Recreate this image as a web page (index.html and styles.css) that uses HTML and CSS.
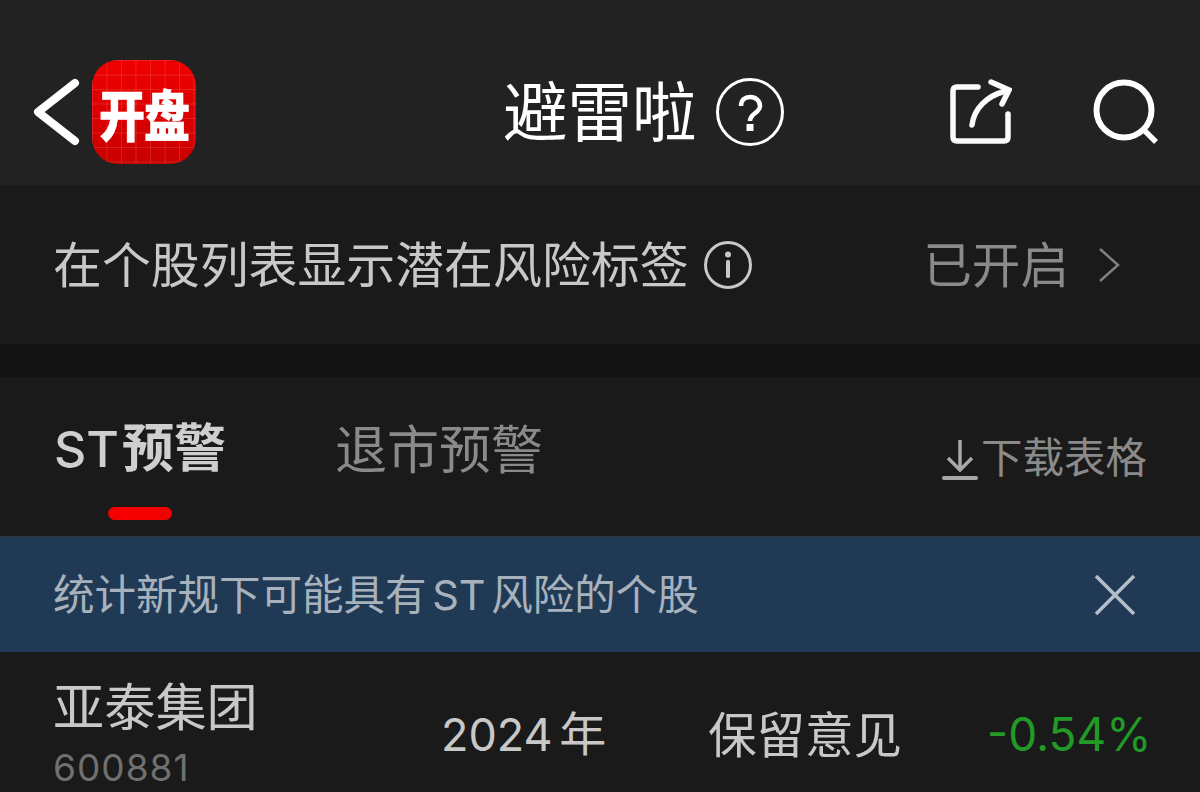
FILE: index.html
```html
<!DOCTYPE html>
<html lang="zh">
<head>
<meta charset="utf-8">
<title>避雷啦</title>
<link rel="stylesheet" href="styles.css">
</head>
<body>
<div class="page">
  <header class="header">
    <div class="header-left">
      <svg class="back" viewBox="0 0 48 70" width="48" height="70"><path d="M43 6 L6 35 L43 64" fill="none" stroke="#fff" stroke-width="8" stroke-linecap="round" stroke-linejoin="round"/></svg>
      <div class="logo"><span class="logo-text">开盘</span></div>
    </div>
    <div class="title-wrap">
      <span class="title">避雷啦</span>
      <svg class="help" viewBox="0 0 68 68" width="68" height="68"><circle cx="34" cy="34" r="32.5" fill="none" stroke="#fff" stroke-width="3"/><path d="M25 28 C25 22 29 19 34 19 C40 19 44 23 44 28 C44 35 34 35 34 43" fill="none" stroke="#fff" stroke-width="4.5"/><rect x="30.5" y="46" width="7" height="7" fill="#fff"/></svg>
    </div>
    <div class="header-right">
      <svg class="share" viewBox="0 0 62 66" width="62" height="66"><path d="M28 8 H7 Q3 8 3 12 V58 Q3 62 7 62 H54 Q58 62 58 58 V35" fill="none" stroke="#fbfbfb" stroke-width="5.5" stroke-linecap="round"/><path d="M22 46 C24 30 36 17 56 12" fill="none" stroke="#fbfbfb" stroke-width="5.5" stroke-linecap="round"/><path d="M41 3 L59 11 L52 25" fill="none" stroke="#fbfbfb" stroke-width="5.5" stroke-linecap="round"/></svg>
      <svg class="search" viewBox="0 0 66 66" width="66" height="66"><circle cx="31" cy="31" r="27.5" fill="none" stroke="#fff" stroke-width="6"/><path d="M50 50 L63 63" fill="none" stroke="#fff" stroke-width="5.5"/></svg>
    </div>
  </header>

  <section class="setting">
    <div class="setting-left">
      <span class="setting-text">在个股列表显示潜在风险标签</span>
      <svg class="info" viewBox="0 0 48 48" width="48" height="48"><circle cx="24" cy="24" r="22.5" fill="none" stroke="#c8c8c8" stroke-width="3"/><circle cx="24" cy="13.5" r="3" fill="#c8c8c8"/><rect x="22" y="19" width="4" height="18" rx="1.5" fill="#c8c8c8"/></svg>
    </div>
    <div class="setting-right">
      <span class="setting-status">已开启</span>
      <svg class="chev" viewBox="0 0 22 34" width="22" height="34"><path d="M2 1 L20 17 L2 33" fill="none" stroke="#808080" stroke-width="2.5"/></svg>
    </div>
  </section>

  <div class="gap"></div>

  <nav class="tabs">
    <div class="tab-list">
      <div class="tab tab-active"><span class="tab-latin">ST</span> 预警<span class="tab-bar"></span></div>
      <div class="tab">退市预警</div>
    </div>
    <div class="download">
      <svg class="dl-icon" viewBox="0 0 38 42" width="38" height="42"><path d="M19 1 V30 M7 19 L19 31 L31 19" fill="none" stroke="#a8a8a8" stroke-width="3.5"/><rect x="1" y="37" width="36" height="4" rx="2" fill="#a8a8a8"/></svg>
      <span class="dl-text">下载表格</span>
    </div>
  </nav>

  <div class="banner">
    <span class="banner-text">统计新规下可能具有 ST 风险的个股</span>
    <svg class="close" viewBox="0 0 42 42" width="42" height="42"><path d="M2 2 L40 40 M40 2 L2 40" fill="none" stroke="#b4bfc9" stroke-width="3.5"/></svg>
  </div>

  <div class="row">
    <div class="stock">
      <div class="stock-name">亚泰集团</div>
      <div class="stock-code">600881</div>
    </div>
    <div class="cell-year">2024 <span class="year-unit">年</span></div>
    <div class="cell-opinion">保留意见</div>
    <div class="cell-change">-0.54%</div>
  </div>
</div>
</body>
</html>
```

FILE: styles.css
```css
* { box-sizing: border-box; }
html, body { margin: 0; padding: 0; background: #1a1a1a; }
body { font-family: "Inter", "Noto Sans CJK SC", sans-serif; overflow: hidden; }
.page { width: 1200px; height: 792px; overflow: hidden; display: flex; flex-direction: column; }

.header { height: 185px; background: #222222; display: flex; align-items: center; padding: 39px 41px 0 32px; flex: none; }
.header-left { display: flex; align-items: center; gap: 12px; }
.back { display: block; }
.logo { width: 104px; height: 104px; border-radius: 26px; display: flex; align-items: center; justify-content: center;
  background-color: #dd0000;
  background-image: linear-gradient(rgba(255,255,255,.13) 1px, transparent 1px), linear-gradient(90deg, rgba(255,255,255,.13) 1px, transparent 1px), linear-gradient(#f00000, #c80000);
  background-size: 14.5px 14.5px, 14.5px 14.5px, 100% 100%; }
.logo-text { display: block; font-family: "Noto Sans CJK SC", sans-serif; font-weight: 900; font-size: 46px; line-height: 1; color: #fff; letter-spacing: -1px; white-space: nowrap; -webkit-text-stroke: 0.5px #fff; transform: scaleY(1.18); }
.title-wrap { margin-left: 307px; display: flex; align-items: center; gap: 19px; }
.title { font-family: "Noto Sans CJK SC", sans-serif; font-size: 64.5px; line-height: 60px; padding-bottom: 8px; color: #fff; font-weight: 400; }
.header-right { margin-left: auto; display: flex; align-items: center; gap: 81px; }
.help, .share, .search, .info, .chev, .close, .dl-icon { display: block; flex: none; }

.setting { height: 159px; flex: none; background: #1a1a1a; display: flex; align-items: center; justify-content: space-between; padding: 0 80px 0 53px; }
.setting-left { display: flex; align-items: center; gap: 15px; }
.setting-text { font-family: "Noto Sans CJK SC", sans-serif; font-size: 48.9px; line-height: 54px; padding-bottom: 6px; color: #c8c8c8; }
.setting-right { display: flex; align-items: center; gap: 29px; }
.setting-status { font-family: "Noto Sans CJK SC", sans-serif; font-size: 48.6px; line-height: 54px; padding-bottom: 6px; color: #8a8a8a; }

.gap { height: 33px; flex: none; background: #141414; }

.tabs { height: 160px; flex: none; background: #1a1a1a; display: flex; justify-content: space-between; padding: 0 53px 0 54px; border-bottom: 1px solid #2a3540; }
.tab-list { display: flex; gap: 109px; padding-top: 41px; }
.tab { position: relative; font-family: "Inter", "Noto Sans CJK SC", sans-serif; font-size: 52px; line-height: 66px; color: #8a8a8a; white-space: nowrap; }
.tab-active { color: #cfcfcf; line-height: 62px; font-weight: 600; word-spacing: -10px; }
.tab-latin { font-size: 50px; font-weight: 500; }
.tab-bar { position: absolute; left: 54px; top: 89px; width: 64px; height: 13px; border-radius: 7px; background: #f40000; }
.download { display: flex; align-items: center; gap: 2px; height: 50px; margin-top: 58px; }
.dl-text { font-family: "Noto Sans CJK SC", sans-serif; font-size: 41.5px; line-height: 40px; padding-bottom: 10px; color: #8a8a8a; }

.banner { height: 115px; flex: none; background: #203a56; display: flex; align-items: center; justify-content: space-between; padding: 0 64px 0 53px; }
.banner-text { font-family: "Inter", "Noto Sans CJK SC", sans-serif; font-size: 41.5px; line-height: 50px; color: #a8b2bc; white-space: nowrap; word-spacing: -6px; }

.row { flex: 1; background: #1a1a1a; display: flex; align-items: flex-start; padding-left: 53px; }
.stock { width: 388px; padding-top: 22px; }
.stock-name { font-family: "Noto Sans CJK SC", sans-serif; font-size: 51.2px; line-height: 60px; color: #c8c8c8; }
.stock-code { font-family: "Inter", sans-serif; font-size: 37px; line-height: 46px; color: #707070; margin-top: 11px; letter-spacing: 1px; }
.cell-year { width: 267px; padding-top: 53px; font-family: "Inter", "Noto Sans CJK SC", sans-serif; font-size: 45px; line-height: 58px; color: #c8c8c8; white-space: nowrap; word-spacing: -6px; }
.year-unit { font-size: 47px; }
.cell-opinion { width: 279px; padding-top: 50px; font-family: "Noto Sans CJK SC", sans-serif; font-size: 48.5px; line-height: 60px; color: #c8c8c8; white-space: nowrap; }
.cell-change { padding-top: 53px; font-family: "Inter", sans-serif; font-size: 46px; line-height: 58px; color: #219a26; white-space: nowrap; }
```
